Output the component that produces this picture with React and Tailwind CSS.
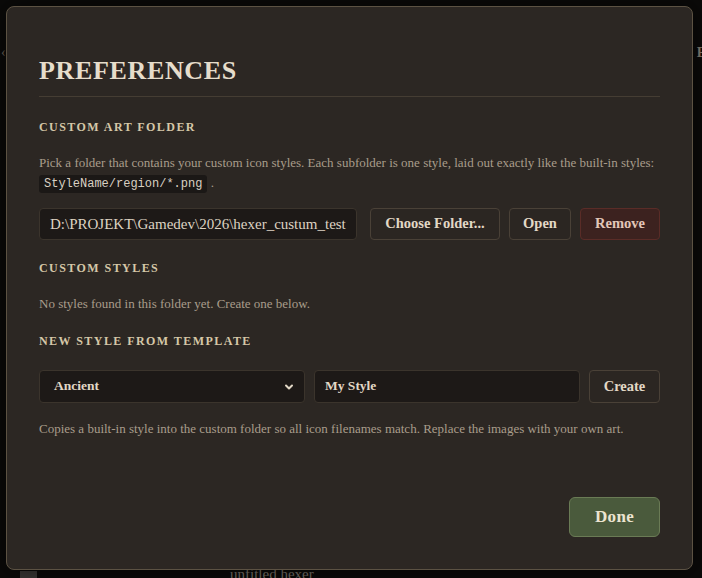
import React from "react";

const serif = "font-['Liberation_Serif',Georgia,serif]";
const mono = "font-['Liberation_Mono',monospace]";

function SectionTitle({ children, className = "" }) {
  return (
    <h3 className={`text-[12px] leading-[16px] font-bold uppercase tracking-[0.12em] text-[#d6c7a8] ${className}`}>
      {children}
    </h3>
  );
}

function Button({ children, className = "" }) {
  return (
    <button className={`h-full rounded-[4px] border border-[#4a4137] bg-[#2b2622] text-[14.5px] font-bold text-[#e2d8c6] ${className}`}>
      {children}
    </button>
  );
}

function Field({ children, className = "" }) {
  return (
    <div className={`flex items-center rounded-[4px] border border-[#3b342c] bg-[#1d1917] ${className}`}>
      {children}
    </div>
  );
}

export default function App() {
  return (
    <div className={`relative h-[578px] w-[702px] overflow-hidden bg-[#0b0a09] ${serif}`}>
      {/* editor behind the dialog */}
      <div className="flex h-full flex-col justify-between">
        <div className="mt-[42px] flex justify-between text-[14px]">
          <span className="ml-[1px] text-[#6b6358]">‹</span>
          <span className="-mr-[4px] font-bold text-[#8a8276]">E</span>
        </div>
        <div className="-mb-[6px] flex h-[20px] items-end gap-[193px] pl-[20px]">
          <div className="h-[13px] w-[17px] bg-[#3a3836]" />
          <span className="text-[15px] leading-[20px] text-[#77716a]">unfitled hexer</span>
        </div>
      </div>

      {/* preferences dialog */}
      <div className="absolute inset-0 p-[6px] pb-[8px] pr-[9px]">
        <div className="flex h-full flex-col rounded-[8px] border border-[#5c5243] bg-[#2c2723] px-8 pb-8 pt-[52px] shadow-[0_0_24px_rgba(0,0,0,0.6)]">
          <h2 className="text-[26px] leading-[24px] font-bold tracking-[0.025em] text-[#e6ddcb]">PREFERENCES</h2>
          <div className="mt-[13px] h-px bg-[#453d33]" />

          <SectionTitle className="mt-[22px]">Custom Art Folder</SectionTitle>
          <p className="mt-[18px] text-[13px] leading-[20px] text-[#a99d8b]">
            Pick a folder that contains your custom icon styles. Each subfolder is one style, laid out exactly like the built-in styles:{" "}
            <code className={`${mono} inline-block rounded-[3px] bg-[#1b1816] px-[5px] text-[12px] leading-[18px] text-[#d9d0c2]`}>StyleName/region/*.png</code> .
          </p>

          <div className="mt-[15px] flex h-[32px] gap-[13px]">
            <Field className="flex-1 px-[10px] text-[15px] text-[#ddd3c3]">D:\PROJEKT\Gamedev\2026\hexer_custum_test</Field>
            <div className="flex gap-[9px]">
              <Button className="w-[130px]">Choose Folder...</Button>
              <Button className="w-[62px]">Open</Button>
              <button className="h-full w-[80px] rounded-[4px] border border-[#5a2c27] bg-[#3c221f] text-[14.5px] font-bold text-[#e2c6b8]">
                Remove
              </button>
            </div>
          </div>

          <SectionTitle className="mt-[20px]">Custom Styles</SectionTitle>
          <p className="mt-[18px] text-[13px] leading-[20px] text-[#a99d8b]">No styles found in this folder yet. Create one below.</p>

          <SectionTitle className="mt-[19px]">New Style From Template</SectionTitle>
          <div className="mt-[21px] flex h-[33px] gap-[9px]">
            <Field className="w-[266px] justify-between pl-[14px] pr-[10px] text-[13.5px] font-bold text-[#e2d8c6]">
              <span>Ancient</span>
              <svg width="10" height="10" viewBox="0 0 10 10" fill="none" stroke="#e2d8c6" strokeWidth="2" strokeLinecap="round" strokeLinejoin="round">
                <path d="M2 3.5l3 3 3-3" />
              </svg>
            </Field>
            <Field className="w-[266px] px-[10px] text-[13.5px] font-bold text-[#e2d8c6]">My Style</Field>
            <Button className="flex-1">Create</Button>
          </div>
          <p className="mt-[16px] text-[13px] leading-[20px] text-[#a99d8b]">
            Copies a built-in style into the custom folder so all icon filenames match. Replace the images with your own art.
          </p>

          <div className="mt-auto flex justify-end">
            <button className="h-[40px] w-[91px] rounded-[6px] border border-[#6a7b55] bg-[#4a5a3c] text-[17px] font-bold tracking-[0.02em] text-[#ece4d0]">
              Done
            </button>
          </div>
        </div>
      </div>
    </div>
  );
}
